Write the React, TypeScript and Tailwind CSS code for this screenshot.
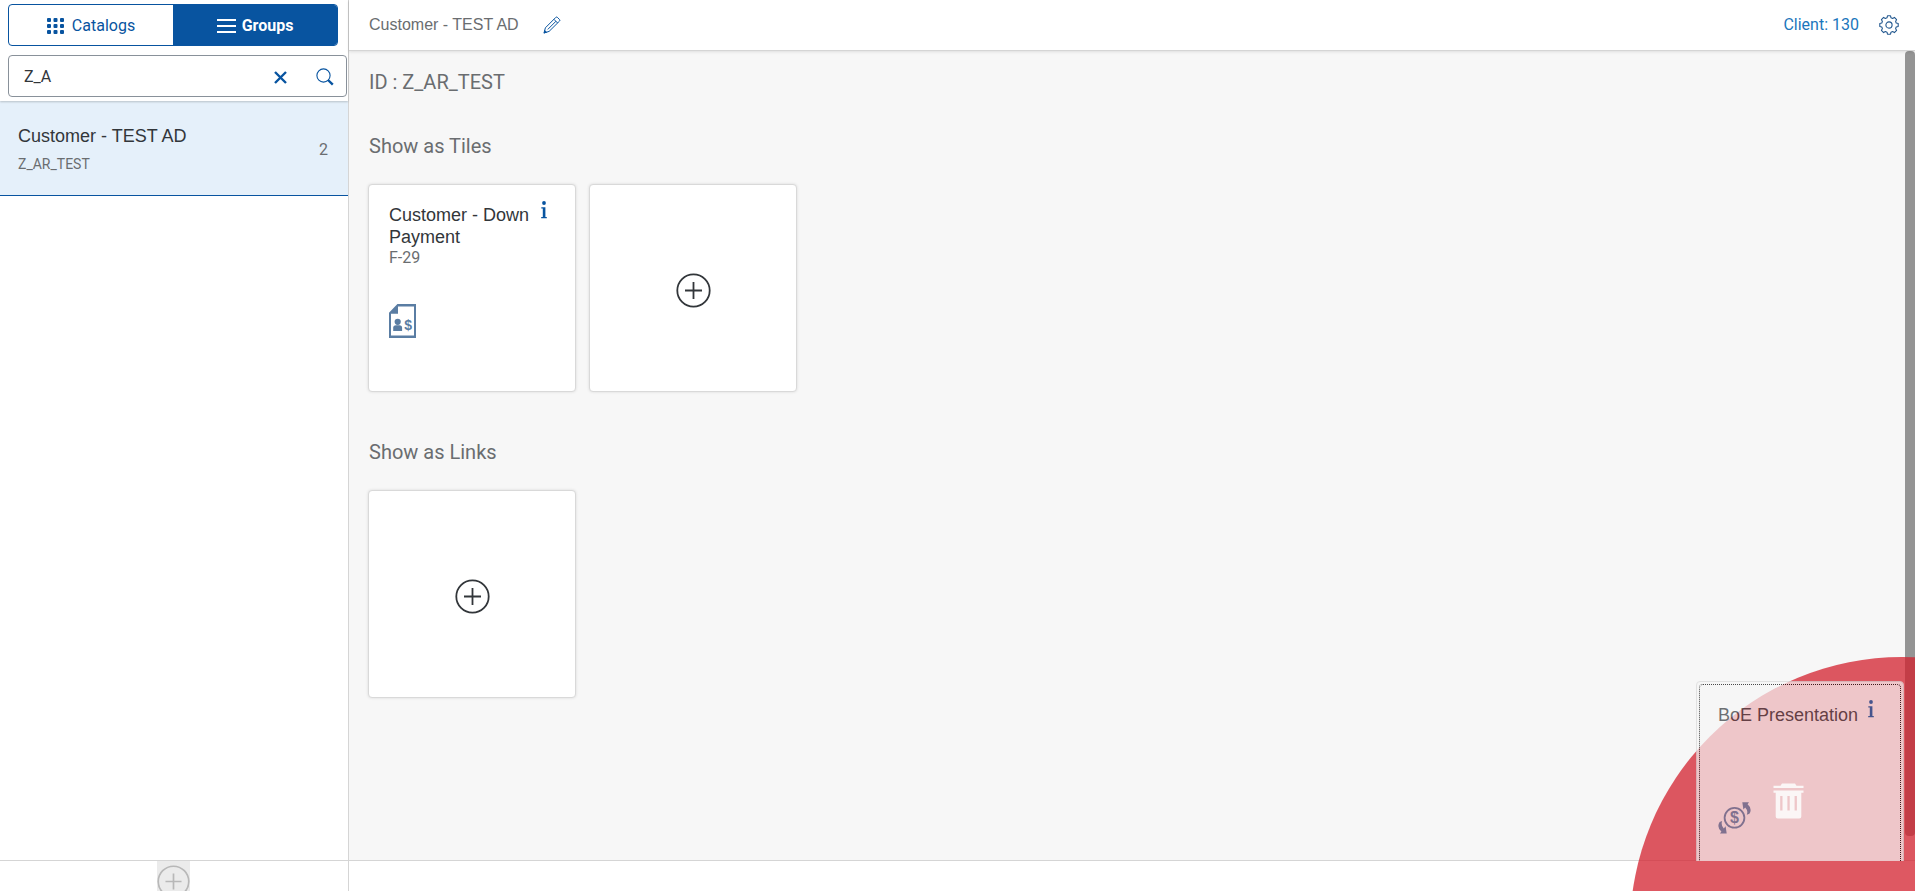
import { useState } from "react";

const font = "font-[Roboto,'Noto_Sans',sans-serif]";
const titleFont = "font-['Liberation_Sans',Arial,sans-serif]";

const GridIcon = () => (
  <svg width="17" height="16" viewBox="0 0 17 16" fill="currentColor">
    {[0, 6, 12].map((y) =>
      [0, 6.5, 13].map((x) => (
        <rect key={`${x}-${y}`} x={x} y={y} width="4" height="4" rx="1" />
      )),
    )}
  </svg>
);

const ListIcon = () => (
  <svg width="19" height="14" viewBox="0 0 19 14" fill="currentColor">
    <rect y="0" width="19" height="2" />
    <rect y="6" width="19" height="2" />
    <rect y="12" width="19" height="2" />
  </svg>
);

const ClearIcon = () => (
  <svg width="13" height="13" viewBox="0 0 13 13">
    <path
      d="M1 1 L12 12 M12 1 L1 12"
      fill="none"
      stroke="currentColor"
      strokeWidth="2.4"
    />
  </svg>
);

const SearchIcon = () => (
  <svg width="18" height="18" viewBox="0 0 18 18" fill="none">
    <circle cx="7.5" cy="7.5" r="6.6" stroke="currentColor" strokeWidth="1.1" />
    <path d="M12 12 L16.8 16.6" stroke="currentColor" strokeWidth="2.4" />
  </svg>
);

const PencilIcon = () => (
  <svg width="18" height="18" viewBox="0 0 18 18" fill="none">
    <path
      d="M1 17 L2.4 11.8 L12.9 1.3 Q13.6 0.7 14.3 1.3 L16.6 3.6 Q17.2 4.3 16.6 5 L6.1 15.4 Z M10.9 3.3 L14.6 7 M13 5.2 L4.8 13.4"
      stroke="currentColor"
      strokeWidth="1"
      strokeLinejoin="round"
    />
    <path d="M0.6 17.4 L1.6 13.8 L4.2 16.4 Z" fill="currentColor" />
  </svg>
);

const GearIcon = () => (
  <svg width="20" height="20" viewBox="0 0 20 20" fill="none">
    <path
      d="M8.5 0.8 H11.5 L12 2.8 L13.6 3.4 L15.4 2.4 L17.6 4.6 L16.6 6.4 L17.2 8 L19.2 8.5 V11.5 L17.2 12 L16.6 13.6 L17.6 15.4 L15.4 17.6 L13.6 16.6 L12 17.2 L11.5 19.2 H8.5 L8 17.2 L6.4 16.6 L4.6 17.6 L2.4 15.4 L3.4 13.6 L2.8 12 L0.8 11.5 V8.5 L2.8 8 L3.4 6.4 L2.4 4.6 L4.6 2.4 L6.4 3.4 L8 2.8 Z"
      stroke="currentColor"
      strokeWidth="1.1"
      strokeLinejoin="round"
    />
    <circle cx="10" cy="10" r="3.1" stroke="currentColor" strokeWidth="1.1" />
  </svg>
);

const InfoIcon = () => (
  <svg width="6" height="18" viewBox="0 0 6 18" fill="currentColor">
    <circle cx="3" cy="2" r="1.9" />
    <path d="M0.3 6.2 H4.4 V16 H5.8 V17.2 H0.2 V16 H1.8 V7.4 H0.3 Z" />
  </svg>
);

const AddIcon = () => (
  <svg width="35" height="35" viewBox="0 0 35 35" fill="none">
    <circle cx="17.5" cy="17.5" r="16.2" stroke="currentColor" strokeWidth="1.8" />
    <path d="M17.5 9 V26 M9 17.5 H26" stroke="currentColor" strokeWidth="1.8" />
  </svg>
);

const CustomerDocIcon = () => (
  <svg width="27" height="34" viewBox="0 0 27 34" fill="currentColor">
    <path
      fillRule="evenodd"
      d="M8.4 0 H27 V34 H0 V8.8 Z M9 2.6 V9.8 H2 V31.4 H25 V2.6 Z"
    />
    <circle cx="8.7" cy="17.8" r="3.1" />
    <path d="M4.2 27 V23.8 Q4.2 21.4 7 21.2 H10.4 Q13.1 21.4 13.1 23.8 V27 Z" />
    <text
      x="19.1"
      y="26"
      textAnchor="middle"
      fontSize="14"
      fontWeight="700"
      fontFamily="Liberation Sans, sans-serif"
    >
      $
    </text>
  </svg>
);

const MoneyCycleIcon = () => (
  <svg width="33" height="32" viewBox="0 0 33 32" fill="currentColor">
    <circle
      cx="16.5"
      cy="15.8"
      r="9.9"
      fill="none"
      stroke="currentColor"
      strokeWidth="1.8"
    />
    <text
      x="16.5"
      y="21.4"
      textAnchor="middle"
      fontSize="16"
      fontWeight="700"
      fontFamily="Liberation Sans, sans-serif"
    >
      $
    </text>
    <path d="M24.3 0.3 H31 L29.6 2.3 Q34.6 6.6 31.4 11.8 L28.8 12.8 Q30.4 8.6 27.2 5.4 L25.4 7.6 Z" />
    <path d="M8.7 31.5 H2 L3.4 29.5 Q-1.6 25.2 1.6 20 L4.2 19 Q2.6 23.2 5.8 26.4 L7.6 24.2 Z" />
  </svg>
);

const TrashIcon = () => (
  <svg width="31" height="36" viewBox="0 0 31 36" fill="currentColor">
    <path d="M7.5 2.8 L9 0.4 H22 L23.5 2.8 H30.5 V5 H0.5 V2.8 Z" />
    <path
      fillRule="evenodd"
      d="M0.5 7.6 H30.5 V9.8 H28.3 V33.6 Q28.3 35.6 26.3 35.6 H4.7 Q2.7 35.6 2.7 33.6 V9.8 H0.5 Z M7.2 13 V27.4 H9.5 V13 Z M14.4 13 V27.4 H16.7 V13 Z M21.6 13 V27.4 H23.9 V13 Z"
    />
  </svg>
);

const AddTile = ({ label }: { label: string }) => (
  <button
    aria-label={label}
    className="flex size-52 items-center justify-center rounded border border-[#d9d9d9] bg-white pt-1 text-[#32363a] shadow-[0_0_3px_rgba(0,0,0,0.12)]"
  >
    <AddIcon />
  </button>
);

const Sidebar = () => {
  const [query, setQuery] = useState("Z_A");

  return (
    <aside className="flex w-[349px] shrink-0 flex-col border-r border-[#d5d5d5] bg-white">
      <div className="relative z-10 flex flex-col gap-[9px] pt-1 pb-1 pl-2 shadow-[0_1px_2px_rgba(0,0,0,0.2)]">
        <div className="mr-[10px] flex h-[42px] overflow-hidden rounded border border-[#0854a0]">
          <button className="flex flex-1 items-center justify-center gap-2 pt-[2px] text-base text-[#0854a0]">
            <GridIcon />
            Catalogs
          </button>
          <button className="flex flex-1 items-center justify-center gap-[6px] bg-[#0854a0] pt-[2px] text-base font-bold text-white">
            <ListIcon />
            Groups
          </button>
        </div>
        <div className="mr-px flex h-[42px] items-center rounded-sm border border-[#89919a] pt-[2px] pr-3 pl-[15px] text-[#0854a0]">
          <input
            aria-label="Search groups"
            value={query}
            onChange={(e) => setQuery(e.target.value)}
            className="min-w-0 flex-1 text-base text-[#32363a] outline-none"
          />
          <button aria-label="Clear" onClick={() => setQuery("")}>
            <ClearIcon />
          </button>
          <button aria-label="Search" className="ml-[29px]">
            <SearchIcon />
          </button>
        </div>
      </div>
      <ul className="flex-1">
        <li className="flex h-[95px] items-center justify-between border-b border-[#0854a0] bg-[#e5f0fa] pr-5 pl-[18px]">
          <div className="pt-1">
            <p className={`text-lg leading-7 text-[#32363a] ${titleFont}`}>
              Customer - TEST AD
            </p>
            <p className="text-sm leading-7 text-[#6a6d70]">Z_AR_TEST</p>
          </div>
          <span className="pt-1 text-base text-[#6a6d70]">2</span>
        </li>
      </ul>
      <footer className="flex h-[31px] items-start justify-center overflow-hidden border-t border-[#d5d5d5]">
        <button
          aria-label="Create group"
          disabled
          className="-ml-px flex w-[33px] justify-center overflow-hidden bg-[#ebebeb] pt-[3px] text-[#b8b8b8]"
        >
          <AddIcon />
        </button>
      </footer>
    </aside>
  );
};

const GroupDetail = () => (
  <main className="flex min-w-0 flex-1 flex-col">
    <header className="relative z-10 flex h-[51px] shrink-0 items-center justify-between border-b border-[#d5d5d5] bg-white pr-4 pl-5 shadow-[0_1px_3px_rgba(0,0,0,0.1)]">
      <div className="flex items-center gap-6">
        <h1 className={`text-base text-[#6a6d70] ${titleFont}`}>
          Customer - TEST AD
        </h1>
        <button aria-label="Edit" className="text-[#0854a0]">
          <PencilIcon />
        </button>
      </div>
      <div className="flex items-center gap-5">
        <a href="#client" className="text-base text-[#1b76bc]">
          Client: 130
        </a>
        <button aria-label="Settings" className="text-[#23588f]">
          <GearIcon />
        </button>
      </div>
    </header>
    <div className="flex min-h-0 flex-1 bg-[#f7f7f7]">
      <div className="min-w-0 flex-1 overflow-hidden pl-5 text-[#6a6d70]">
        <h2 className="mt-[17px] text-xl leading-7">ID : Z_AR_TEST</h2>
        <section className="mt-9">
          <h2 className="text-xl leading-7">Show as Tiles</h2>
          <div className="mt-6 -ml-px flex gap-[13px]">
            <article className="size-52 rounded border border-[#d9d9d9] bg-white py-[19px] pl-5 shadow-[0_0_3px_rgba(0,0,0,0.12)]">
              <div className="flex gap-[6px]">
                <h3
                  className={`w-[146px] text-lg leading-[22px] text-[#32363a] ${titleFont}`}
                >
                  Customer - Down Payment
                </h3>
                <button
                  aria-label="Tile details"
                  className="-mt-[3px] self-start text-[#0854a0]"
                >
                  <InfoIcon />
                </button>
              </div>
              <p className="text-base leading-5">F-29</p>
              <div className="mt-9 text-[#5a7da3]">
                <CustomerDocIcon />
              </div>
            </article>
            <AddTile label="Add tile" />
          </div>
        </section>
        <section className="mt-[46px]">
          <h2 className="text-xl leading-7">Show as Links</h2>
          <div className="mt-6 -ml-px flex">
            <AddTile label="Add link" />
          </div>
        </section>
      </div>
      <div className="w-[10px] shrink-0">
        <div className="h-[97%] rounded bg-[#949494]" />
      </div>
    </div>
    <footer className="h-[31px] shrink-0 border-t border-[#d5d5d5] bg-white" />
  </main>
);

const DeleteZone = () => (
  <div className="pointer-events-none absolute inset-0 z-20 overflow-hidden">
    <div className="absolute -right-[259px] -bottom-[310px] size-[544px] rounded-full bg-[#d3202d]/75" />
    <div className="absolute right-[11px] bottom-[30px] h-[180px] w-52 overflow-hidden">
      <article className="size-52 rounded border border-[#d9d9d9] bg-[#f6f6f6] p-[2px] opacity-70">
        <div className="h-full rounded border border-dotted border-black px-[18px] pt-4">
          <div className="flex gap-[10px]">
            <h3
              className={`text-lg leading-7 whitespace-nowrap text-[#32363a] ${titleFont}`}
            >
              BoE Presentation
            </h3>
            <span className="-mt-px text-[#0854a0]">
              <InfoIcon />
            </span>
          </div>
          <div className="mt-[73px] text-[#5a7da3]">
            <MoneyCycleIcon />
          </div>
        </div>
      </article>
    </div>
    <div className="absolute right-[111px] bottom-[72px] text-[#fbf6f6]">
      <TrashIcon />
    </div>
  </div>
);

export default function App() {
  return (
    <div className={`relative flex h-screen overflow-hidden ${font}`}>
      <Sidebar />
      <GroupDetail />
      <DeleteZone />
    </div>
  );
}
